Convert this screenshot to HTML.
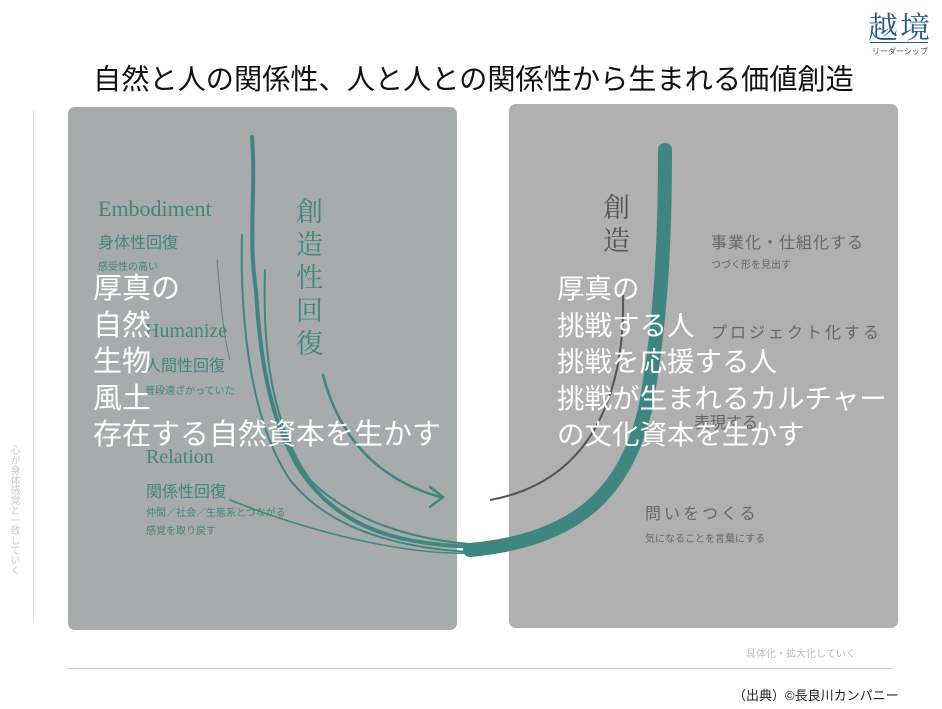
<!DOCTYPE html>
<html><head><meta charset="utf-8"><style>
body{margin:0;width:942px;height:709px;background:#fff;position:relative;overflow:hidden;font-family:"Liberation Sans","Noto Sans CJK JP",sans-serif}
.a{position:absolute;white-space:nowrap}
.serif{font-family:"Liberation Serif","Noto Serif CJK SC",serif}
.w{color:#fff;font-size:29px;line-height:36.5px}
</style></head><body>
<div class="a" style="left:93px;top:57px;font-size:28.2px;color:#111">自然と人の関係性、人と人との関係性から生まれる価値創造</div>
<div class="a serif" style="left:868px;top:3px;font-size:30px;color:#2a5a8a;letter-spacing:2px">越境</div>
<div class="a" style="left:870px;top:42px;width:58px;border-top:1px solid #2a5a8a"></div>
<div class="a" style="left:872px;top:46px;font-size:8px;color:#2a5a8a">リーダーシップ</div>

<div class="a" style="left:68px;top:107px;width:389px;height:523px;background:#a8abac;border-radius:7px"></div>
<div class="a" style="left:509px;top:104px;width:389px;height:524px;background:#b0b0b0;border-radius:7px"></div>

<div class="a" style="left:5px;top:445px;width:14px;font-size:10px;line-height:12px;color:#ccc;writing-mode:vertical-rl">心が身体感覚と一致していく</div>
<div class="a" style="left:33px;top:110px;height:510px;border-left:1px solid #ddd"></div>
<div class="a" style="left:68px;top:668px;width:825px;border-top:1px solid #ccc"></div>
<div class="a" style="left:746px;top:645px;font-size:10px;color:#bbb">具体化・拡大化していく</div>
<div class="a" style="left:733px;top:685px;font-size:13px;color:#222">（出典）©長良川カンパニー</div>

<svg class="a" style="left:0;top:0" width="942" height="709">
<g fill="none" stroke="#3f8680" stroke-linecap="round">
<path d="M252 137 C256 190 248 240 256 290 C260 360 270 420 300 470 C340 530 400 545 480 547 C560 548 620 500 640 420 C660 330 660 220 662 150" stroke-width="4"/>
<path d="M242 235 C240 320 250 420 290 480 C330 530 400 548 470 552" stroke-width="2"/>
<path d="M265 270 C262 360 275 430 310 480 C350 520 410 540 480 545" stroke-width="2"/>
<path d="M665 150 C665 250 660 330 645 410 C625 490 580 540 470 550" stroke-width="14"/>
<path d="M230 500 C330 540 420 555 470 553" stroke-width="1.5"/>
<path d="M323 375 C340 440 380 480 440 497" stroke-width="2.5"/>
<path d="M430 487 L443 497 L430 507" stroke-width="2.5"/>
<path d="M217 260 C220 290 222 330 230 360" stroke="#6a7a78" stroke-width="1"/>
</g>
<path d="M623 295 C625 380 600 480 490 500" fill="none" stroke="#555" stroke-width="2"/>
</svg>

<div class="a serif" style="left:98px;top:196px;font-size:22px;color:#3f8680">Embodiment</div>
<div class="a" style="left:98px;top:229px;font-size:16px;color:#3f8680">身体性回復</div>
<div class="a" style="left:98px;top:258px;font-size:10px;color:#3f8680">感受性の高い</div>
<div class="a serif" style="left:145px;top:320px;font-size:20px;color:#3f8680">Humanize</div>
<div class="a" style="left:145px;top:352px;font-size:16px;color:#3f8680">人間性回復</div>
<div class="a" style="left:145px;top:382px;font-size:10px;color:#3f8680">普段遠ざかっていた</div>
<div class="a serif" style="left:146px;top:446px;font-size:20px;color:#3f8680">Relation</div>
<div class="a" style="left:146px;top:478px;font-size:16px;color:#3f8680">関係性回復</div>
<div class="a" style="left:146px;top:505px;font-size:10px;line-height:18px;color:#3f8680">仲間／社会／生態系とつながる<br>感覚を取り戻す</div>
<div class="a serif" style="left:296px;top:196px;width:30px;font-size:27px;line-height:33px;color:#3f8680;white-space:normal">創造性回復</div>

<div class="a serif" style="left:603px;top:192px;width:30px;font-size:27px;line-height:33px;color:#555;white-space:normal">創造</div>
<div class="a" style="left:711px;top:229px;font-size:16px;color:#666;letter-spacing:1px">事業化・仕組化する</div>
<div class="a" style="left:711px;top:256px;font-size:10px;color:#666">つづく形を見出す</div>
<div class="a" style="left:711px;top:319px;font-size:16px;color:#666;letter-spacing:3px">プロジェクト化する</div>
<div class="a" style="left:694px;top:409px;font-size:16px;color:#666">表現する</div>
<div class="a" style="left:645px;top:500px;font-size:16px;color:#666;letter-spacing:3px">問いをつくる</div>
<div class="a" style="left:645px;top:530px;font-size:10px;color:#666">気になることを言葉にする</div>

<div class="a w" style="left:93px;top:271px">厚真の<br>自然<br>生物<br>風土<br>存在する自然資本を生かす</div>
<div class="a w" style="left:557px;top:271px;font-size:27.5px">厚真の<br>挑戦する人<br>挑戦を応援する人<br>挑戦が生まれるカルチャー<br>の文化資本を生かす</div>
</body></html>
